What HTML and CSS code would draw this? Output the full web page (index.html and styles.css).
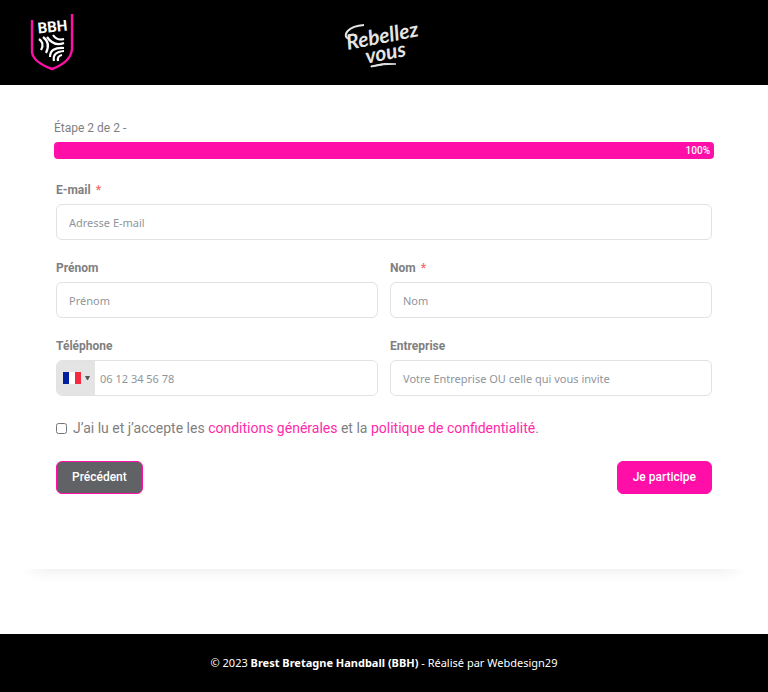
FILE: index.html
```html
<!DOCTYPE html>
<html lang="fr">
<head>
<meta charset="UTF-8">
<meta name="viewport" content="width=device-width, initial-scale=1.0">
<title>Rebellez-vous - Brest Bretagne Handball</title>
<link rel="stylesheet" href="styles.css">
</head>
<body>
  <header class="header">
    <a href="#" class="logo-bbh" aria-label="Brest Bretagne Handball">
      <svg width="44" height="60" viewBox="0 0 44 60">
        <path d="M2 7 V39 Q3 49 22 56 Q41 49 42 36 V1" fill="none" stroke="#ff0fa8" stroke-width="2.4"/>
        <text x="8" y="19" transform="rotate(-6 22 18)" class="logo-bbh-text">BBH</text>
        <g fill="none" stroke="#fff" stroke-width="2.2">
          <path d="M9 26 Q15 30 11 37"/>
          <path d="M13 24 Q21 30 16 40"/>
          <path d="M17 24 Q24 34 34 30"/>
          <path d="M23 22 Q27 28 34 26"/>
          <path d="M20 44 Q20 34 34 35"/>
          <path d="M24 48 Q22 39 34 38"/>
          <path d="M28 48 Q27 43 32 42"/>
        </g>
      </svg>
    </a>
    <a href="#" class="logo-rebellez" aria-label="Rebellez vous">
      <svg width="88" height="60" viewBox="-4 -4 88 60">
        <g transform="rotate(-11 40 26)" class="logo-rebellez-text">
          <text x="3" y="26">Rebellez</text>
          <text x="19" y="43">vous</text>
        </g>
        <path d="M27 49 Q40 45 52 47 Q40 47 27 50 Z" fill="#e4e4e4" stroke="#e4e4e4"/>
        <path d="M5 22 C-3 19 4 9 20 8" fill="none" stroke="#e4e4e4" stroke-width="2"/>
      </svg>
    </a>
  </header>

  <main class="card">
    <form>
      <p class="step">Étape 2 de 2 -</p>
      <div class="progress"><span>100%</span></div>

      <div class="fields">
        <div class="field full">
          <label for="email">E-mail <span class="required">*</span></label>
          <input type="email" id="email" placeholder="Adresse E-mail">
        </div>
        <div class="field">
          <label for="prenom">Prénom</label>
          <input type="text" id="prenom" placeholder="Prénom">
        </div>
        <div class="field">
          <label for="nom">Nom <span class="required">*</span></label>
          <input type="text" id="nom" placeholder="Nom">
        </div>
        <div class="field">
          <label for="telephone">Téléphone</label>
          <div class="phone">
            <div class="country">
              <svg width="18" height="12" viewBox="0 0 18 12">
                <rect width="6" height="12" fill="#00209f"/>
                <rect x="6" width="6" height="12" fill="#fff"/>
                <rect x="12" width="6" height="12" fill="#f42a41"/>
              </svg>
              <svg width="5" height="4" viewBox="0 0 5 4"><path d="M0 0H5L3 4H2Z" fill="#555"/></svg>
              <select aria-label="Pays">
                <option>France</option>
              </select>
            </div>
            <input type="tel" id="telephone" placeholder="06 12 34 56 78">
          </div>
        </div>
        <div class="field">
          <label for="entreprise">Entreprise</label>
          <input type="text" id="entreprise" placeholder="Votre Entreprise OU celle qui vous invite">
        </div>
      </div>

      <div class="terms">
        <input type="checkbox" id="terms">
        <label for="terms">J’ai lu et j’accepte les <a href="#">conditions générales</a> et la <a href="#">politique de confidentialité</a>.</label>
      </div>

      <div class="actions">
        <button type="button" class="btn btn-prev">Précédent</button>
        <button type="submit" class="btn">Je participe</button>
      </div>
    </form>
  </main>

  <footer class="footer">
    <p>© 2023 <strong>Brest Bretagne Handball (BBH)</strong> - Réalisé par Webdesign29</p>
  </footer>
</body>
</html>
```
FILE: styles.css
```css
* {
  box-sizing: border-box;
}

body {
  margin: 0;
  min-height: 100vh;
  display: flex;
  flex-direction: column;
  background-color: #fff;
  color: #7f7f7f;
  font-family: Roboto, sans-serif;
  font-size: 14px;
}

.header {
  display: grid;
  grid-template-columns: 1fr auto 1fr;
  align-items: center;
  padding: 13px 30px 12px;
  background-color: #000;
}

.header svg {
  display: block;
}

.logo-bbh {
  justify-self: start;
}

.logo-bbh-text {
  fill: #fff;
  font-family: Roboto, sans-serif;
  font-size: 15px;
  font-weight: 700;
}

.logo-rebellez-text {
  fill: #e4e4e4;
  font-family: Lato, sans-serif;
  font-size: 21px;
  font-style: italic;
  font-weight: 700;
}

.card {
  margin: 0 18px 65px;
  padding: 35px 36px 75px;
  background-color: #fff;
  box-shadow: 0 16px 16px -16px rgba(0, 0, 0, 0.1);
}

.step {
  margin: 0 0 6px;
  font-size: 12px;
  line-height: 16px;
}

.progress {
  padding: 0 4px;
  border-radius: 4px;
  background-color: #ff0fa8;
  color: #fff;
  font-size: 10px;
  font-weight: 500;
  line-height: 17px;
  text-align: right;
}

.fields {
  display: grid;
  grid-template-columns: 1fr 1fr;
  gap: 20px 12px;
  padding: 23px 2px 0;
}

.full {
  grid-column: 1 / -1;
}

.field label {
  display: block;
  margin-bottom: 6px;
  font-size: 12px;
  font-weight: 700;
  line-height: 16px;
}

.required {
  margin-left: 2px;
  color: #f56c6c;
}

.field input {
  display: block;
  width: 100%;
  height: 36px;
  padding: 0 12px;
  border: 1px solid #e2e2e2;
  border-radius: 6px;
  background-color: #fff;
  font-family: "Noto Sans", sans-serif;
  font-size: 11px;
}

.field input::placeholder {
  color: #8f959b;
}

.phone {
  display: flex;
  border: 1px solid #e2e2e2;
  border-radius: 6px;
  overflow: hidden;
}

.phone input {
  flex: 1;
  height: 34px;
  padding: 0 5px;
  border: none;
  border-radius: 0;
}

.country {
  position: relative;
  display: flex;
  align-items: center;
  gap: 4px;
  padding: 0 5px 0 6px;
  background-color: #e4e4e4;
}

/* invisible list over the flag */
.country select {
  position: absolute;
  inset: 0;
  width: 100%;
  opacity: 0;
  cursor: pointer;
}

.terms {
  display: flex;
  align-items: center;
  gap: 6px;
  padding: 22px 2px 0;
  font-size: 14px;
  line-height: 20px;
}

.terms input {
  width: 11px;
  height: 11px;
  margin: 0;
}

.terms a {
  color: #ff2aa9;
  text-decoration: none;
}

.actions {
  display: flex;
  justify-content: space-between;
  padding: 23px 2px 0;
}

.btn {
  padding: 0 15px;
  border: 1px solid #ff0fa8;
  border-radius: 6px;
  background-color: #ff0fa8;
  color: #fff;
  font-family: Roboto, sans-serif;
  font-size: 12px;
  font-weight: 500;
  line-height: 31px;
  cursor: pointer;
}

.btn-prev {
  background-color: #606266;
}

.footer {
  flex: 1;
  padding: 20px;
  background-color: #000;
  color: #fff;
  font-family: "Noto Sans", sans-serif;
  font-size: 11px;
  line-height: 18px;
  text-align: center;
}

.footer p {
  margin: 0;
}
```
